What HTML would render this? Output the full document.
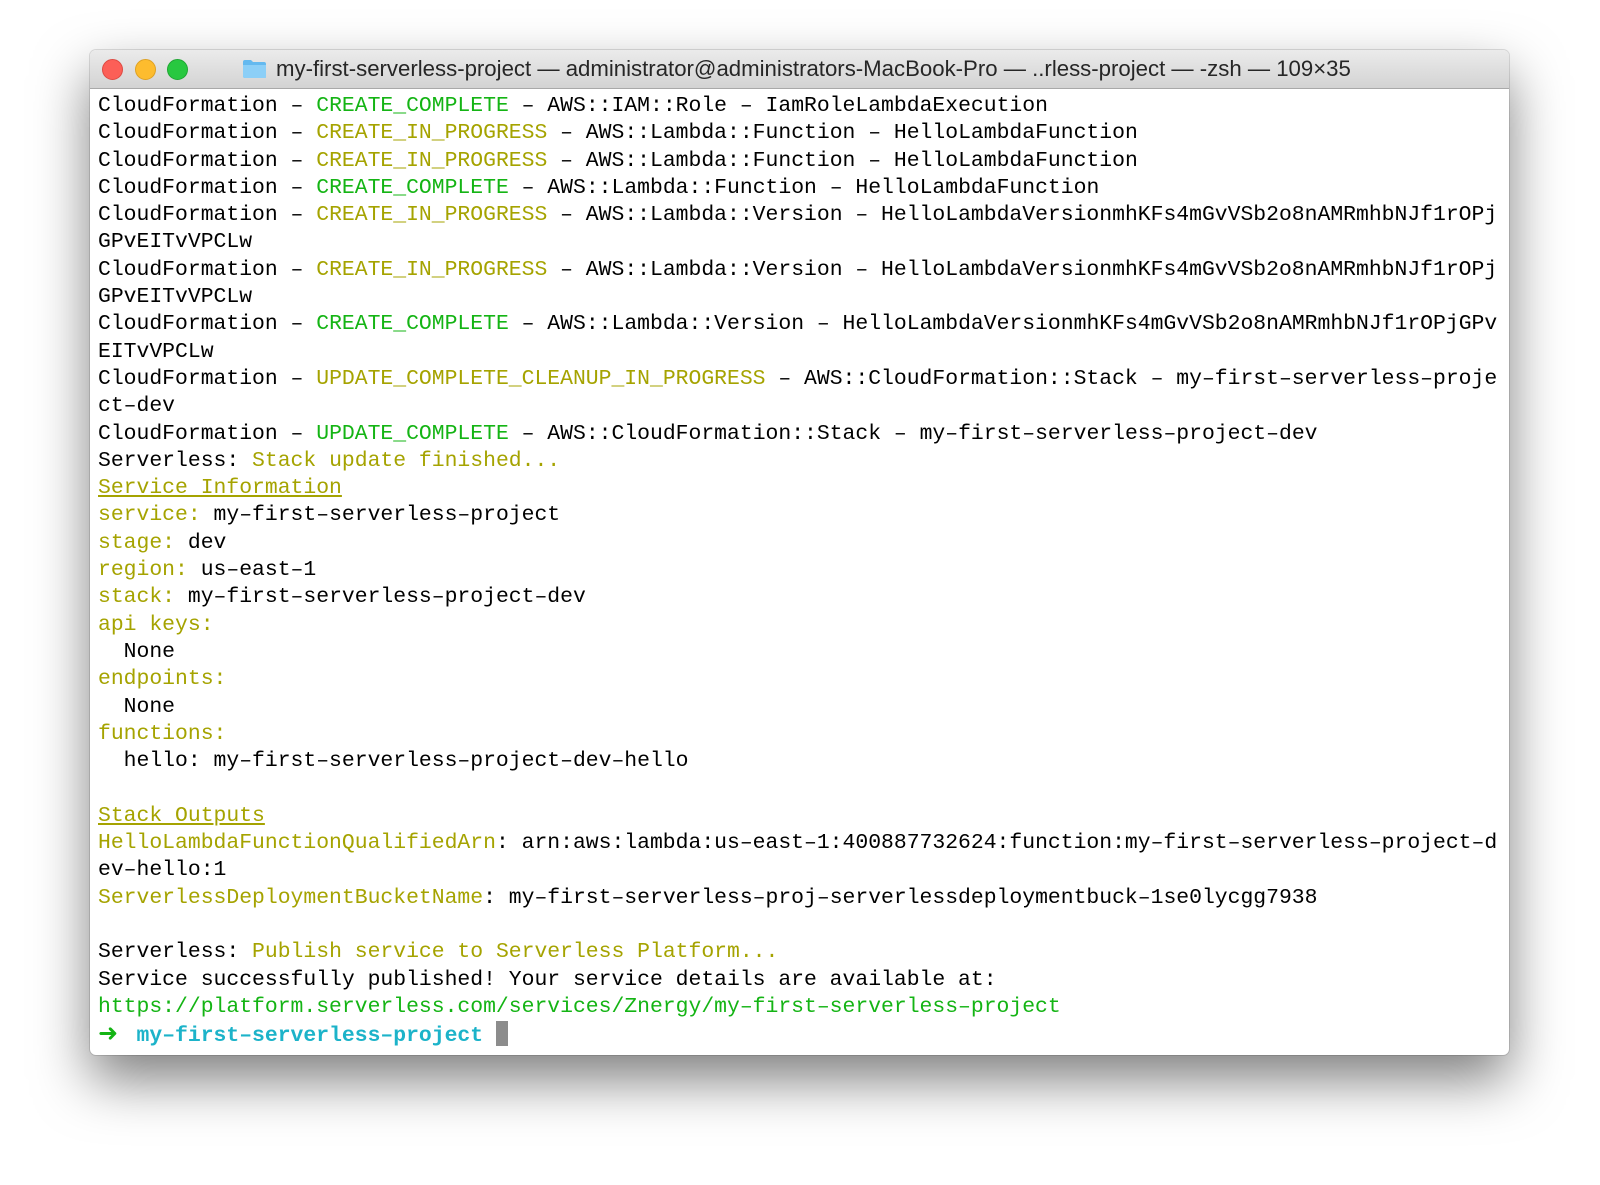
<!DOCTYPE html>
<html><head><meta charset="utf-8">
<style>
html,body{margin:0;padding:0;background:#fff;width:1600px;height:1185px;overflow:hidden}
.win{position:absolute;left:90px;top:50px;width:1419px;height:1005px;background:#fff;border-radius:6px;box-shadow:0 25px 55px rgba(0,0,0,0.5),0 0 0 1px rgba(0,0,0,0.12);overflow:hidden}
.tb{position:absolute;left:0;top:0;width:100%;height:38px;background:linear-gradient(#ebebeb,#d3d3d3);border-bottom:1px solid #a9a9a9}
.dot{position:absolute;top:9px;width:19px;height:19px;border-radius:50%}
.title{position:absolute;left:186px;top:6px;font:22.2px "Liberation Sans",sans-serif;color:#262626;white-space:nowrap}
.term{position:absolute;left:8px;top:43px;font-family:"Liberation Mono",monospace;font-size:21.4px;line-height:27.3px;white-space:pre;color:#000}
.g{color:#14b414}.y{color:#a5a300}.u{text-decoration:underline}
.c{color:#1cb3c9;font-weight:bold}
.ar{display:inline-block;width:12.84px;overflow:visible;color:#14b414;font-weight:bold;font-size:24px;line-height:20px;font-family:"DejaVu Sans",sans-serif}
.cur{display:inline-block;width:12px;height:25px;background:#8c8c8c;vertical-align:-5px}
</style></head><body>
<div class="win">
<div class="tb">
<div class="dot" style="left:12px;background:#fc5f57;border:0.5px solid #de4a42"></div>
<div class="dot" style="left:45px;background:#fdbc2e;border:0.5px solid #dea123"></div>
<div class="dot" style="left:77px;background:#28c840;border:0.5px solid #1fa733"></div>
<svg style="position:absolute;left:152px;top:9px" width="25" height="20" viewBox="0 0 25 20"><path d="M1 3 Q1 1 3 1 H9 L11 3 H22 Q24 3 24 5 V18 Q24 19 22 19 H3 Q1 19 1 17 Z" fill="#64b9ef"/><path d="M1 6 H24 V18 Q24 19 22 19 H3 Q1 19 1 17 Z" fill="#8ccff7"/></svg>
<div class="title">my-first-serverless-project — administrator@administrators-MacBook-Pro — ..rless-project — -zsh — 109×35</div>
</div>
<div class="term">CloudFormation – <span class="g">CREATE_COMPLETE</span> – AWS::IAM::Role – IamRoleLambdaExecution
CloudFormation – <span class="y">CREATE_IN_PROGRESS</span> – AWS::Lambda::Function – HelloLambdaFunction
CloudFormation – <span class="y">CREATE_IN_PROGRESS</span> – AWS::Lambda::Function – HelloLambdaFunction
CloudFormation – <span class="g">CREATE_COMPLETE</span> – AWS::Lambda::Function – HelloLambdaFunction
CloudFormation – <span class="y">CREATE_IN_PROGRESS</span> – AWS::Lambda::Version – HelloLambdaVersionmhKFs4mGvVSb2o8nAMRmhbNJf1rOPj
GPvEITvVPCLw
CloudFormation – <span class="y">CREATE_IN_PROGRESS</span> – AWS::Lambda::Version – HelloLambdaVersionmhKFs4mGvVSb2o8nAMRmhbNJf1rOPj
GPvEITvVPCLw
CloudFormation – <span class="g">CREATE_COMPLETE</span> – AWS::Lambda::Version – HelloLambdaVersionmhKFs4mGvVSb2o8nAMRmhbNJf1rOPjGPv
EITvVPCLw
CloudFormation – <span class="y">UPDATE_COMPLETE_CLEANUP_IN_PROGRESS</span> – AWS::CloudFormation::Stack – my–first–serverless–proje
ct–dev
CloudFormation – <span class="g">UPDATE_COMPLETE</span> – AWS::CloudFormation::Stack – my–first–serverless–project–dev
Serverless: <span class="y">Stack update finished...</span>
<span class="y u">Service Information</span>
<span class="y">service:</span> my–first–serverless–project
<span class="y">stage:</span> dev
<span class="y">region:</span> us–east–1
<span class="y">stack:</span> my–first–serverless–project–dev
<span class="y">api keys:</span>
  None
<span class="y">endpoints:</span>
  None
<span class="y">functions:</span>
  hello: my–first–serverless–project–dev–hello

<span class="y u">Stack Outputs</span>
<span class="y">HelloLambdaFunctionQualifiedArn</span>: arn:aws:lambda:us–east–1:400887732624:function:my–first–serverless–project–d
ev–hello:1
<span class="y">ServerlessDeploymentBucketName</span>: my–first–serverless–proj–serverlessdeploymentbuck–1se0lycgg7938

Serverless: <span class="y">Publish service to Serverless Platform...</span>
Service successfully published! Your service details are available at:
<span class="g">https://platform.serverless.com/services/Znergy/my–first–serverless–project</span>
<span class="ar">➜</span>  <span class="c">my–first–serverless–project</span> <span class="cur"></span></div>
</div>
</body></html>
